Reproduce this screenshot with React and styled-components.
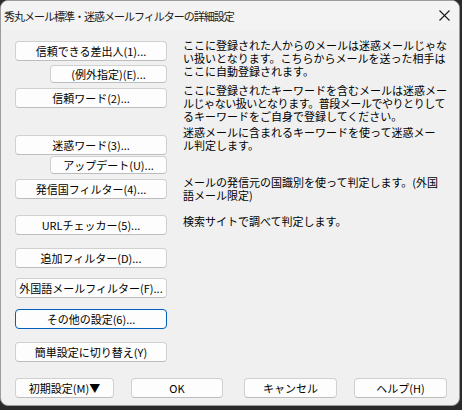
import React from "react";
import styled, { createGlobalStyle } from "styled-components";

const Global = createGlobalStyle`
  html, body { margin: 0; padding: 0; }
  body {
    width: 462px;
    height: 410px;
    overflow: hidden;
    background: #2a2a2a;
    font-family: "Noto Sans CJK JP", "Noto Sans", sans-serif;
  }
`;

const Window = styled.div`
  box-sizing: border-box;
  width: 460px;
  height: 406px;
  background: #f0f0f0;
  border: 1px solid #9c9c9c;
  border-radius: 8px;
  display: flex;
  flex-direction: column;
  overflow: hidden;
`;

const TitleBar = styled.div`
  height: 29px;
  flex: none;
  display: flex;
  align-items: center;
  justify-content: space-between;
  padding: 0 9px 0 3px;
  background: #f3f3f3;
`;

const Title = styled.div`
  font-size: 11px;
  letter-spacing: -1px;
  color: #1a1a1a;
  white-space: nowrap;
`;

const Body = styled.div`
  display: flex;
  align-items: flex-start;
  padding: 9px 0 0 14px;
`;

const LeftCol = styled.div`
  width: 152px;
  padding-top: 2px;
  display: flex;
  flex-direction: column;
  align-items: flex-end;
  flex: none;
`;

const RightCol = styled.div`
  margin-left: 16px;
  display: flex;
  flex-direction: column;
`;

const Btn = styled.button`
  box-sizing: border-box;
  width: ${(p) => (p.$small ? "117px" : "152px")};
  height: ${(p) => (p.$small ? "18px" : "20px")};
  margin-top: ${(p) => p.$mt || 0}px;
  padding: 0;
  background: #fdfdfd;
  border: 1px solid ${(p) => (p.$default ? "#005fb8" : "#d0d0d0")};
  border-bottom-color: ${(p) => (p.$default ? "#005fb8" : "#bdbdbd")};
  border-radius: 4px;
  font-family: "Noto Sans CJK JP", "Noto Sans", sans-serif;
  font-size: 11px;
  line-height: 1;
  color: #000;
  text-align: center;
  white-space: nowrap;
  display: flex;
  align-items: center;
  justify-content: center;
`;

const Para = styled.p`
  margin: ${(p) => p.$mt || 0}px 0 0 0;
  font-size: 11px;
  line-height: 13px;
  color: #000;
  white-space: nowrap;
`;

const Tight = styled.span`
  letter-spacing: -0.45px;
`;

const Footer = styled.div`
  display: flex;
  padding: 16px 0 0 14px;
`;

const FootBtn = styled(Btn)`
  width: ${(p) => p.$w}px;
  margin-top: 0;
  margin-left: ${(p) => p.$ml || 0}px;
`;

const CloseIcon = () => (
  <svg width="11" height="11" viewBox="0 0 11 11">
    <path d="M0.5 0.5 L10.5 10.5 M10.5 0.5 L0.5 10.5" stroke="#1a1a1a" strokeWidth="1.1" fill="none" />
  </svg>
);

export default function App() {
  return (
    <>
      <Global />
      <Window>
        <TitleBar>
          <Title>秀丸メール標準・迷惑メールフィルターの詳細設定</Title>
          <CloseIcon />
        </TitleBar>
        <Body>
          <LeftCol>
            <Btn>信頼できる差出人(1)...</Btn>
            <Btn $small $mt={4}>(例外指定)(E)...</Btn>
            <Btn $mt={5}>信頼ワード(2)...</Btn>
            <Btn $mt={27}>迷惑ワード(3)...</Btn>
            <Btn $small $mt={1}>アップデート(U)...</Btn>
            <Btn $mt={5}>発信国フィルター(4)...</Btn>
            <Btn $mt={16}>URLチェッカー(5)...</Btn>
            <Btn $mt={13}>追加フィルター(D)...</Btn>
            <Btn $mt={10}>外国語メールフィルター(F)...</Btn>
            <Btn $mt={11} $default>その他の設定(6)...</Btn>
            <Btn $mt={13}>簡単設定に切り替え(Y)</Btn>
          </LeftCol>
          <RightCol>
            <Para>
              ここに登録された人からのメールは迷惑メールじゃな
              <br />
              い扱いとなります。こちらからメールを送った相手は
              <br />
              ここに自動登録されます。
            </Para>
            <Para $mt={6}>
              ここに登録されたキーワードを含むメールは迷惑メー
              <br />
              <Tight>ルじゃない扱いとなります。普段メールでやりとりして</Tight>
              <br />
              るキーワードをご自身で登録してください。
            </Para>
            <Para $mt={3}>
              迷惑メールに含まれるキーワードを使って迷惑メー
              <br />
              ル判定します。
            </Para>
            <Para $mt={24}>
              メールの発信元の国識別を使って判定します。(外国
              <br />
              語メール限定)
            </Para>
            <Para $mt={13}>検索サイトで調べて判定します。</Para>
          </RightCol>
        </Body>
        <Footer>
          <FootBtn $w={99}>初期設定(M)▼</FootBtn>
          <FootBtn $w={92} $ml={17}>OK</FootBtn>
          <FootBtn $w={93} $ml={21}>キャンセル</FootBtn>
          <FootBtn $w={93} $ml={17}>ヘルプ(H)</FootBtn>
        </Footer>
      </Window>
    </>
  );
}
